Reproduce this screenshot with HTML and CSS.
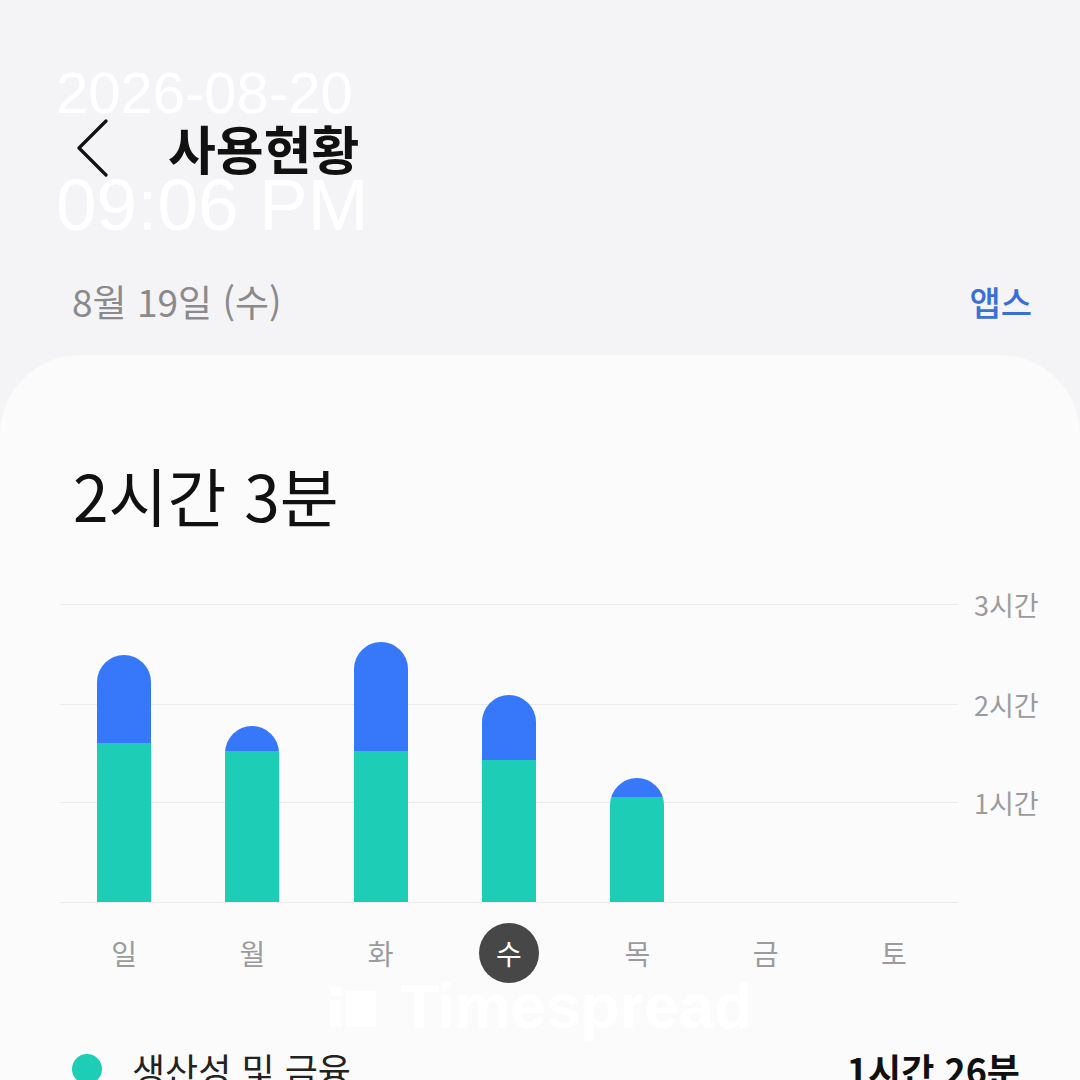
FILE: index.html
```html
<!DOCTYPE html>
<html lang="ko">
<head>
  <meta charset="UTF-8" />
  <meta name="viewport" content="width=device-width, initial-scale=1.0"/>
  <title>사용현황</title>
  <link rel="stylesheet" href="styles.css">
</head>
<body>
  <div class="screen">
    <div class="stamp">
      <div class="stamp-date">2026-08-20</div>
      <div class="stamp-time">09:06 PM</div>
    </div>

    <header class="appbar">
      <svg class="back" width="34" height="58" viewBox="0 0 34 58">
        <polyline points="30,2 3,29 30,56" fill="none" stroke="#111" stroke-width="3.2" stroke-linecap="round" stroke-linejoin="round"/>
      </svg>
      <h1>사용현황</h1>
    </header>

    <div class="daterow">
      <span class="date">8월 19일 (수)</span>
      <a class="apps">앱스</a>
    </div>

    <section class="card">
      <div class="total">2시간 3분</div>

      <div class="chart">
        <div class="plot">
          <div class="col"><div class="bar" style="height:247px"><div class="seg-blue"></div><div class="seg-green" style="height:159px"></div></div></div>
          <div class="col"><div class="bar" style="height:176px"><div class="seg-blue"></div><div class="seg-green" style="height:151px"></div></div></div>
          <div class="col"><div class="bar" style="height:260px"><div class="seg-blue"></div><div class="seg-green" style="height:151px"></div></div></div>
          <div class="col"><div class="bar" style="height:207px"><div class="seg-blue"></div><div class="seg-green" style="height:142px"></div></div></div>
          <div class="col"><div class="bar" style="height:124px"><div class="seg-blue"></div><div class="seg-green" style="height:105px"></div></div></div>
          <div class="col"></div>
          <div class="col"></div>
        </div>
        <div class="yaxis">
          <div class="ylabel">3시간</div>
          <div class="ylabel">2시간</div>
          <div class="ylabel short">1시간</div>
        </div>
      </div>

      <div class="days">
        <div class="day">일</div>
        <div class="day">월</div>
        <div class="day">화</div>
        <div class="day"><span class="today">수</span></div>
        <div class="day">목</div>
        <div class="day">금</div>
        <div class="day">토</div>
      </div>

      <div class="watermark">
        <svg width="48" height="40" viewBox="0 0 48 40">
          <rect x="0" y="0" width="11" height="9" fill="#fff"/>
          <rect x="0" y="13" width="11" height="27" fill="#fff"/>
          <rect x="16" y="4" width="30" height="36" fill="#fff"/>
        </svg>
        <span>Timespread</span>
      </div>

      <div class="legend-row">
        <span class="dot"></span>
        <span class="legend-name">생산성 및 금융</span>
        <span class="legend-time">1시간 26분</span>
      </div>
    </section>
  </div>
</body>
</html>
```

FILE: styles.css
```css
body {
  margin: 0;
  background: #f4f4f6;
  font-family: "Noto Sans CJK KR", "Noto Sans", sans-serif;
  color: #111;
}

.screen {
  position: relative;
  width: 1080px;
  height: 1080px;
  overflow: hidden;
}

/* timestamp burned into the capture */
.stamp {
  position: absolute;
  left: 56px;
  top: 64px;
  z-index: 5;
  font-family: "Liberation Sans", Arial, sans-serif;
  color: #fff;
}

.stamp-date {
  font-size: 58px;
  line-height: 1;
}

.stamp-time {
  margin-top: 46px;
  font-size: 73px;
  line-height: 1;
}

.appbar {
  display: flex;
  align-items: center;
  height: 96px;
  margin-top: 100px;
  padding-left: 76px;
}

.appbar h1 {
  margin: 0 0 0 58px;
  font-size: 52px;
  line-height: 1;
  font-weight: 700;
}

.daterow {
  display: flex;
  align-items: center;
  justify-content: space-between;
  height: 60px;
  margin-top: 75px;
  padding: 0 48px 0 72px;
}

.date {
  font-size: 37px;
  color: #8a8a8c;
}

.apps {
  font-size: 34px;
  color: #3a6fd6;
  font-weight: 500;
}

.card {
  position: relative;
  margin-top: 24px;
  height: 725px;
  background: #fbfbfb;
  border-radius: 80px 80px 0 0;
  padding: 107px 0 0 60px;
  box-sizing: border-box;
}

.total {
  padding-left: 13px;
  font-size: 64px;
  line-height: 1;
}

.chart {
  display: flex;
  margin-top: 78px;
}

.plot {
  width: 898px;
  height: 298px;
  display: grid;
  grid-template-columns: repeat(7, 1fr);
  align-items: end;
  background: linear-gradient(to bottom,
    #ebebed 0 1px, transparent 1px 100px,
    #ebebed 100px 101px, transparent 101px 198px,
    #ebebed 198px 199px, transparent 199px);
  border-bottom: 1px solid #ebebed;
}

.col {
  display: flex;
  justify-content: center;
  align-items: flex-end;
  height: 100%;
}

.bar {
  width: 54px;
  display: flex;
  flex-direction: column;
  border-radius: 27px 27px 0 0;
  overflow: hidden;
}

.seg-blue {
  flex: 1;
  background: #3778fb;
}

.seg-green {
  background: #1ecdb5;
}

.yaxis {
  margin-top: -14px;
  padding-left: 16px;
}

.ylabel {
  height: 100px;
  font-size: 27px;
  line-height: 30px;
  color: #9b9b9d;
}

.ylabel.short {
  height: 98px;
  margin-top: -2px;
}

.days {
  display: grid;
  grid-template-columns: repeat(7, 1fr);
  width: 898px;
  margin-top: 20px;
}

.day {
  display: flex;
  justify-content: center;
  align-items: center;
  height: 60px;
  font-size: 28px;
  color: #9b9b9d;
}

.today {
  display: flex;
  justify-content: center;
  align-items: center;
  width: 60px;
  height: 60px;
  border-radius: 50%;
  background: #474747;
  color: #fff;
}

.watermark {
  position: absolute;
  left: 330px;
  top: 620px;
  display: flex;
  align-items: center;
  gap: 22px;
  font-family: "Liberation Sans", Arial, sans-serif;
  font-weight: 700;
  font-size: 63px;
  line-height: 1;
  color: #fff;
}

.legend-row {
  display: flex;
  align-items: center;
  height: 60px;
  margin-top: 56px;
  padding: 0 60px 0 12px;
}

.dot {
  width: 30px;
  height: 30px;
  border-radius: 50%;
  background: #1ecdb5;
}

.legend-name {
  margin-left: 30px;
  font-size: 36px;
  color: #222;
}

.legend-time {
  margin-left: auto;
  font-size: 36px;
  font-weight: 700;
}
```
